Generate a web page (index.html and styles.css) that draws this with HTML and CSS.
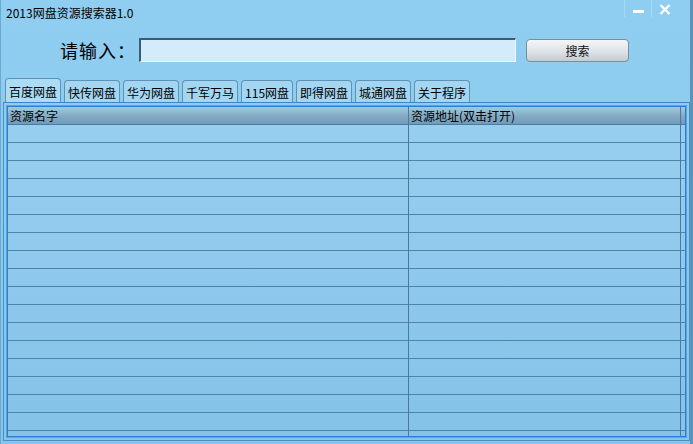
FILE: index.html
```html
<!DOCTYPE html>
<html lang="zh-CN">

<head>
  <meta charset="UTF-8">
  <title>2013网盘资源搜索器1.0</title>
  <link rel="stylesheet" href="styles.css">
</head>

<body>

  <div class="window">
    <div class="titlebar">
      <span class="title">2013网盘资源搜索器1.0</span>
      <div class="controls">
        <span class="ctl min"><i></i></span>
        <span class="ctl close">
          <svg width="12" height="11" viewBox="0 0 12 11">
            <path d="M1.5 1 L10.5 10 M10.5 1 L1.5 10" stroke="#fff" stroke-width="2.4" />
          </svg>
        </span>
      </div>
    </div>

    <div class="search">
      <label class="label">请输入：</label>
      <input class="input" type="text">
      <button class="button">搜索</button>
    </div>

    <div class="tabs">
      <span class="tab active">百度网盘</span>
      <span class="tab">快传网盘</span>
      <span class="tab">华为网盘</span>
      <span class="tab">千军万马</span>
      <span class="tab">115网盘</span>
      <span class="tab">即得网盘</span>
      <span class="tab">城通网盘</span>
      <span class="tab">关于程序</span>
    </div>

    <div class="panel">
      <div class="list">
        <div class="head">
          <div class="cell">资源名字</div>
          <div class="cell">资源地址(双击打开)</div>
          <div class="cell"></div>
        </div>
        <div class="rows">
          <div class="col"></div>
          <div class="col"></div>
          <div class="col"></div>
        </div>
      </div>
    </div>
  </div>

</body>

</html>
```

FILE: styles.css
```css
* {
  margin: 0;
  padding: 0;
  box-sizing: border-box;
}

body {
  width: 693px;
  height: 444px;
  overflow: hidden;
  font-family: "Noto Sans CJK SC", "DejaVu Sans", sans-serif;
  font-size: 12px;
  color: #000;
}

.window {
  width: 693px;
  height: 444px;
  display: flex;
  flex-direction: column;
  background: linear-gradient(#90cef1, #86c6ec);
  border-left: 1px solid #6aa9d3;
  border-right: 3px solid #5c93b8;
}

.titlebar {
  height: 28px;
  display: flex;
  justify-content: space-between;
  align-items: flex-start;
}

.title {
  padding: 5px 0 0 5px;
  font-size: 12px;
  line-height: 16px;
}

.controls {
  display: flex;
  margin-right: 12px;
}

.ctl {
  width: 27px;
  height: 17px;
  display: flex;
  align-items: center;
  justify-content: center;
  border-left: 1px solid #a9d9f3;
}

.ctl.min i {
  display: block;
  width: 11px;
  height: 3px;
  margin-top: 6px;
  background: #fff;
}

.ctl.close svg {
  margin-top: 2px;
}

.search {
  height: 48px;
  display: flex;
  align-items: center;
  padding-left: 59px;
  padding-bottom: 4px;
}

.label {
  width: 79px;
  font-size: 18px;
  line-height: 22px;
  letter-spacing: 1px;
}

.input {
  width: 377px;
  height: 24px;
  background: #d3ecfb;
  border-top: 2px solid #3e5a70;
  border-left: 2px solid #3e5a70;
  border-right: 1px solid #eef8fe;
  border-bottom: 1px solid #eef8fe;
}

.button {
  width: 103px;
  height: 23px;
  margin-left: 10px;
  border: 1px solid #7c8e9a;
  border-radius: 4px;
  background: linear-gradient(#f4f6f7, #dde3e7 55%, #c3ccd2);
  font-family: inherit;
  font-size: 12px;
  color: #111;
}

.tabs {
  height: 26px;
  display: flex;
  align-items: flex-end;
  gap: 3px;
  padding-left: 4px;
}

.tab {
  height: 22px;
  padding: 1px 3px 0;
  line-height: 21px;
  background: #a3d6f3;
  border: 1px solid #5e91b3;
  border-bottom: 0;
  border-radius: 4px 4px 0 0;
  white-space: nowrap;
}

.tab.active {
  height: 24px;
  line-height: 23px;
  background: #acdbf5;
}

.panel {
  flex: 1;
  margin: 0 0 3px 2px;
  width: 687px;
  padding: 3px;
  border: 1px solid #4f8fc0;
  border-top-color: #3d85c8;
}

.list {
  height: 100%;
  display: flex;
  flex-direction: column;
  border: 1px solid #2b7fd0;
  outline: 1px solid #5aa6da;
  background: linear-gradient(#98cff0, #85c2e8);
  overflow: hidden;
}

.head {
  height: 18px;
  display: grid;
  grid-template-columns: 401px 272px 1fr;
  background: linear-gradient(#a4c8de, #83aac4 55%, #6f9bb9);
  border-bottom: 1px solid #4d7c9d;
}

.head .cell {
  line-height: 17px;
  padding-left: 2px;
  border-right: 1px solid #4a7999;
  white-space: nowrap;
}

.rows {
  flex: 1;
  display: grid;
  grid-template-columns: 401px 272px 1fr;
  background: repeating-linear-gradient(to bottom, transparent 0 17px, #4f83aa 17px 18px);
}

.rows .col {
  border-right: 1px solid #4a7999;
}

.rows .col:last-child,
.head .cell:last-child {
  border-right: 0;
}
```
